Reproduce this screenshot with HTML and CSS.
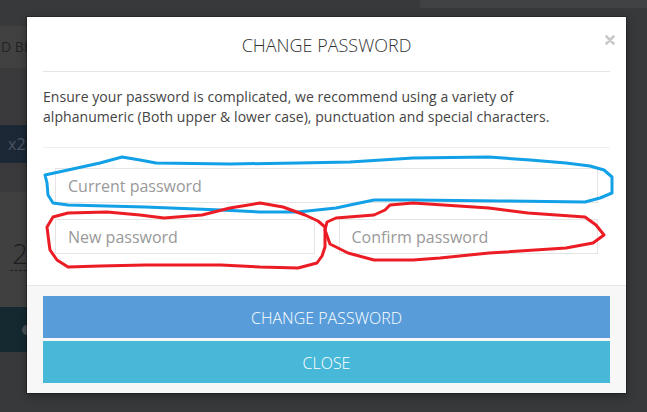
FILE: index.html
```html
<!DOCTYPE html>
<html lang="en">
<head>
	<meta charset="UTF-8">
	<title>Change password</title>
	<link rel="stylesheet" href="styles.css">
</head>
<body>
	<div class="page">
		<div class="topbar"><div class="topbar-tab"></div></div>
		<div class="side">
			<div class="spacer s1"></div>
			<div class="crumb">D BILLING</div>
			<div class="spacer s2"></div>
			<div class="qty">x2</div>
			<div class="spacer s3"></div>
			<div class="total"><span class="total-num">2</span></div>
			<div class="pay"><span class="pay-icon"></span></div>
		</div>
	</div>

	<div class="modal">
		<div class="modal-header">
			<h4 class="modal-title">CHANGE PASSWORD</h4>
		</div>
		<button class="close" type="button">
			<svg width="10" height="10" viewBox="0 0 10 10"><path d="M1.5 1.5 L8.5 8.5 M8.5 1.5 L1.5 8.5" stroke="#c8c8c8" stroke-width="2.6" stroke-linecap="round"/></svg>
		</button>
		<div class="modal-body">
			<p>Ensure your password is complicated, we recommend using a variety of alphanumeric (Both upper &amp; lower case), punctuation and special characters.</p>
			<hr>
			<div class="fields">
				<input type="password" placeholder="Current password">
				<div class="field-row">
					<input type="password" placeholder="New password">
					<input type="password" placeholder="Confirm password">
				</div>
			</div>
		</div>
		<div class="modal-footer">
			<button class="btn btn-primary" type="button">Change password</button>
			<button class="btn btn-info" type="button">Close</button>
		</div>
	</div>

	<!-- hand drawn marks over the fields -->
	<svg class="marks" width="647" height="412" viewBox="0 0 647 412">
		<path class="blue" d="M45,175 L68,170 L100,163 L122,157 L140,160 L156,163 L230,164 L298,163 L350,162 L413,158 L489,157 L530,160 L566,163 L590,166 L604,170 L612,177 L612,193 L600,198 L585,202 L500,201 L413,200 L374,200 L350,205 L336,208 L298,212 L260,212 L221,210 L145,207 L68,205 L53,203 L48,195 L47,183 Z"/>
		<path class="red" d="M47,227 L53,217 L68,213 L107,212 L140,215 L164,218 L202,215 L230,208 L260,203 L283,207 L305,215 L318,221 L325,227 L325,247 L322,256 L317,263 L298,268 L260,267 L221,265 L145,265 L100,266 L68,267 L57,260 L50,250 L49,243 Z"/>
		<path class="red" d="M327,222 L336,218 L374,215 L385,210 L390,205 L413,203 L489,208 L528,213 L585,217 L596,225 L604,235 L593,243 L566,248 L489,253 L440,258 L413,260 L374,260 L348,253 L330,244 L325,230 Z"/>
	</svg>
</body>
</html>
```

FILE: styles.css
```css
/*reset*/
html,body,div,p,h4,hr{
	margin: 0;
	padding: 0;
}
body{
	width: 647px;
	height: 412px;
	overflow: hidden;
	position: relative;
	background: #38393b;
	font-family: "Open Sans", "Liberation Sans", sans-serif;
}

/*page behind the backdrop*/
.topbar{
	height: 8px;
	display: flex;
	justify-content: flex-end;
}
.topbar-tab{
	width: 227px;
	background: #414243;
}
.side{
	width: 200px;
}
.spacer{background: #3a3a3c;}
.s1{height: 18px; background: #38393b;}
.s2{height: 57px;}
.s3{height: 29px;}
.crumb{
	height: 42px;
	line-height: 42px;
	padding-left: 1px;
	background: #414141;
	color: #242424;
	font-size: 14px;
}
.qty{
	height: 38px;
	line-height: 38px;
	padding-left: 8px;
	background: #1c2835;
	color: #4a5562;
	font-size: 16px;
}
.total{
	height: 115px;
	background: #404041;
	padding: 44px 0 0 10px;
	box-sizing: border-box;
}
.total-num{
	display: inline-block;
	font-size: 28px;
	line-height: 34px;
	font-weight: 300;
	color: #1e1e1e;
	border-bottom: 1px dashed #1e1e1e;
	padding: 0 3px 0 2px;
}
.pay{
	height: 45px;
	background: #142a30;
	display: flex;
	align-items: center;
	padding-left: 22px;
}
.pay-icon{
	width: 10px;
	height: 10px;
	border-radius: 50%;
	background: #4a5256;
}

/*modal*/
.modal{
	position: absolute;
	left: 27px;
	top: 17px;
	width: 599px;
	background: #fff;
	box-shadow: 0 0 0 1px rgba(0,0,0,.25), 0 3px 9px rgba(0,0,0,.35);
}
.modal-header{
	margin: 0 16px;
	padding: 16px 0 14px;
	border-bottom: 1px solid #e5e5e5;
	text-align: center;
}
.modal-title{
	font-size: 18px;
	line-height: 24px;
	font-weight: 300;
	color: #333;
}
.close{
	position: absolute;
	right: 11px;
	top: 18px;
	width: 10px;
	height: 10px;
	padding: 0;
	border: 0;
	background: none;
	display: flex;
}
.modal-body{
	padding: 15px 16px 31px;
}
.modal-body p{
	margin-bottom: 20px;
	padding-right: 12px;
	font-size: 14px;
	line-height: 20px;
	letter-spacing: .06px;
	color: #444;
}
.modal-body hr{
	margin-bottom: 20px;
	border: 0;
	border-top: 1px solid #eee;
}
.fields{
	padding: 0 12px;
	display: flex;
	flex-direction: column;
	gap: 16px;
}
.field-row{
	display: flex;
	gap: 24px;
}
.fields input{
	width: 100%;
	min-width: 0;
	height: 35px;
	box-sizing: border-box;
	border: 1px solid #e5e5e5;
	border-radius: 0;
	padding: 0 12px;
	font: 16px "Open Sans", "Liberation Sans", sans-serif;
	color: #555;
	outline: none;
}
.fields input::placeholder{color: #999;}

.modal-footer{
	background: #f7f7f7;
	border-top: 1px solid #e8e8e8;
	padding: 10px 16px;
	display: flex;
	flex-direction: column;
	gap: 3px;
}
.btn{
	display: block;
	width: 100%;
	height: 42px;
	border: 0;
	border-radius: 0;
	color: #fff;
	font: 300 16px/42px "Open Sans", "Liberation Sans", sans-serif;
	text-transform: uppercase;
	cursor: pointer;
}
.btn-primary{background: #589dda;}
.btn-info{background: #47b8d7;}

/*annotation marks*/
.marks{
	position: absolute;
	left: 0;
	top: 0;
	pointer-events: none;
}
.marks path{
	fill: none;
	stroke-width: 3;
	stroke-linejoin: round;
}
.marks .blue{stroke: #12a0e6;}
.marks .red{stroke: #ec1c24;}
```
